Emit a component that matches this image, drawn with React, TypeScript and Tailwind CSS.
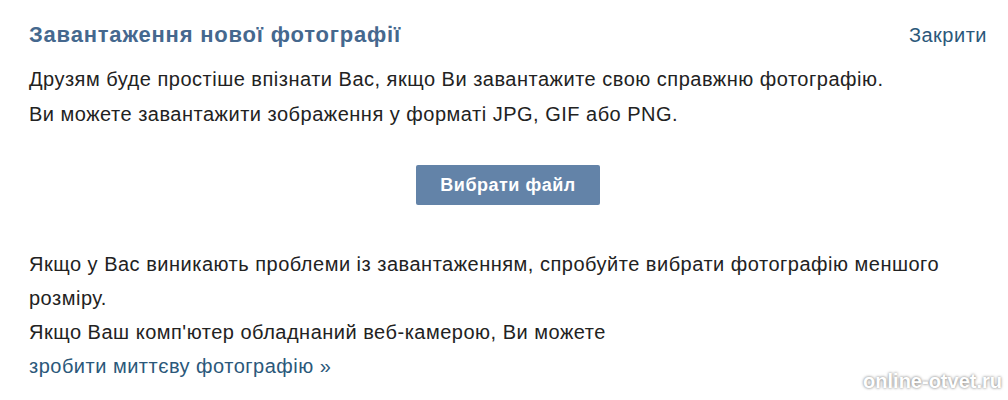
export default function App() {
  return (
    <div
      className="relative w-[1008px] h-[400px] bg-white overflow-hidden pl-[29px] pr-[21px] pt-[20px]"
      style={{ fontFamily: '"Liberation Sans", Arial, sans-serif' }}
    >
      <div className="flex justify-between items-center h-[30px]">
        <h1 className="text-[22px] font-bold tracking-[0.8px] text-[#45688e] leading-[30px]">
          Завантаження нової фотографії
        </h1>
        <a className="text-[20px] tracking-[0.5px] text-[#2b587a] leading-[30px] cursor-pointer">Закрити</a>
      </div>

      <div className="mt-[12px] text-[20px] tracking-[0.5px] leading-[35px] text-[#222]">
        <p>Друзям буде простіше впізнати Вас, якщо Ви завантажите свою справжню фотографію.</p>
        <p>Ви можете завантажити зображення у форматі JPG, GIF або PNG.</p>
      </div>

      <div className="flex justify-center mt-[33px]">
        <button className="w-[184px] h-[40px] rounded-[2px] bg-[#6383a8] text-white text-[18px] tracking-[0.5px] font-bold">
          Вибрати файл
        </button>
      </div>

      <div className="mt-[42px] text-[20px] tracking-[0.5px] leading-[34px] text-[#222]">
        <p>
          Якщо у Вас виникають проблеми із завантаженням, спробуйте вибрати фотографію меншого
          <br />
          розміру.
        </p>
        <p>Якщо Ваш комп'ютер обладнаний веб-камерою, Ви можете</p>
        <a className="text-[#2b587a] cursor-pointer">зробити миттєву фотографію »</a>
      </div>

      <div className="absolute right-[6px] bottom-[4px] text-[20px] font-bold text-white [text-shadow:0_0_3px_rgba(0,0,0,0.6)]">
        online-otvet.ru
      </div>
    </div>
  );
}
